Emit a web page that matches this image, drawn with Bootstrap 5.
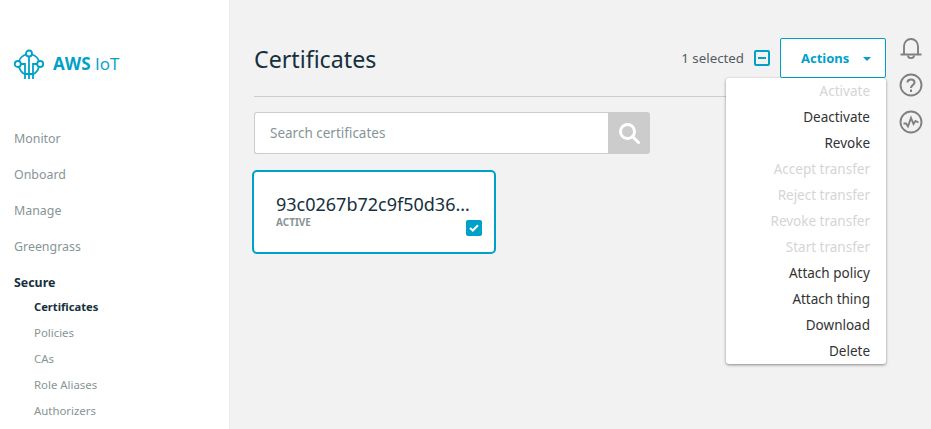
<!DOCTYPE html>
<html lang="en">
<head>
<meta charset="utf-8">
<title>AWS IoT Certificates</title>
<link rel="stylesheet" href="https://cdn.jsdelivr.net/npm/bootstrap@5.3.0/dist/css/bootstrap.min.css">
<style>
html,body{height:429px;overflow:hidden}
body{font-family:"Noto Sans","Open Sans",sans-serif;background:#f2f2f2;color:#16303d;font-size:13px}
.shell{height:429px}
.side{width:230px;flex:none;background:#fff;padding:44px 14px 0;overflow:hidden;border-right:1px solid #eee}
.brand{color:#00a1c9;height:40px;gap:9px;font-family:"Open Sans",sans-serif;font-size:17px;line-height:40px;margin-bottom:37px;white-space:nowrap}
.brand b{font-weight:700}
.brand span{font-weight:400}
.side-top{display:block;color:#879596;font-size:12.4px;line-height:36px;height:36px;text-decoration:none}
.side-top.on{color:#16303d;font-weight:700;line-height:36px}
.side-sub{display:block;color:#879596;font-size:11.4px;line-height:26px;height:26px;padding-left:20px;text-decoration:none}
.side-sub.on{color:#16303d;font-weight:700;font-size:11.2px;margin-top:-7px}
.work{padding:38px 0 0 24px;min-width:0}
.title{font-size:23.2px;font-weight:400;margin:0;padding-top:2px;line-height:38px;color:#16303d}
.count{color:#545b64;font-size:13.3px;margin-right:10px;padding-top:2px}
.indet{width:16px;height:16px;border:2px solid #00a1c9;border-radius:2px;margin-right:10px}
.indet i{display:block;width:8px;height:2px;background:#00a1c9}
.act-btn{width:106px;height:40px;border:1px solid #00a1c9;border-radius:2px;background:#fff;color:#00a1c9;font-weight:700;font-size:13px;padding:2px 0 0 20px;gap:14px}
.act-btn:hover,.act-btn:active{background:#fff;color:#00a1c9;border-color:#00a1c9}
.caret{width:0;height:0;border-left:4px solid transparent;border-right:4px solid transparent;border-top:4px solid #00a1c9}
.act-menu{right:0;top:40px;width:159px;padding:0;margin:0;border:0;border-radius:3px;box-shadow:0 1px 3px rgba(0,0,0,.45);height:286px;font-size:13.5px}
.act-item{padding:0 16px 0 0;text-align:right;height:26px;line-height:26px;color:#333;background:none}
.act-item.disabled{color:#d5d5d5}
.rule{height:1px;background:#ccc;margin:18px 0 15px}
.finder{width:396px;height:42px}
.finder input{height:42px;border:1px solid #ccc;border-right:0;border-radius:3px 0 0 3px;padding-left:15px;font-size:13.5px;color:#333;min-width:0}
.finder input::placeholder{color:#879596;opacity:1}
.finder button{width:42px;height:42px;flex:none;background:#ccc;border:0;border-radius:0 3px 3px 0;padding:0}
.cert{width:244px;height:84px;margin:16px 0 0 -2px;border:2px solid #00a1c9;border-radius:5px;background:#fff;padding:20px 22px;position:relative}
.cert-id{font-size:18px;line-height:24px;color:#16303d;white-space:nowrap}
.cert-state{font-size:10px;font-weight:700;color:#879596;line-height:12px}
.tick{position:absolute;right:12px;bottom:16px;width:16px;height:16px;background:#00a1c9;border-radius:2px}
.rail{width:45px;flex:none;padding:36px 0 0 5px;gap:13px}
</style>
</head>
<body>
<div class="shell d-flex">
  <nav class="side">
    <div class="brand d-flex align-items-center">
      <svg width="30" height="30" viewBox="0 0 30 30" fill="none" stroke="#00a1c9" stroke-width="1.8">
        <circle cx="15" cy="4.500" r="3"/><circle cx="3.800" cy="15" r="3"/><circle cx="26.200" cy="15" r="3"/>
        <path d="M12.200 5.500C8.500 6.500 6 9 5 12.200M17.800 5.500C21.500 6.500 24 9 25 12.200M5 17.800C6 21 8 24 10.500 25H19.500C22 24 24 21 25 17.800"/>
        <path d="M15 7.500V30M11 30V15H6.800M19 30V15H23.200"/>
      </svg>
      <div><b>AWS</b> <span>IoT</span></div>
    </div>
    <a class="side-top" href="#">Monitor</a>
    <a class="side-top" href="#">Onboard</a>
    <a class="side-top" href="#">Manage</a>
    <a class="side-top" href="#">Greengrass</a>
    <a class="side-top on" href="#">Secure</a>
    <a class="side-sub on" href="#">Certificates</a>
    <a class="side-sub" href="#">Policies</a>
    <a class="side-sub" href="#">CAs</a>
    <a class="side-sub" href="#">Role Aliases</a>
    <a class="side-sub" href="#">Authorizers</a>
  </nav>
  <main class="work flex-grow-1">
    <div class="d-flex align-items-center justify-content-between">
      <h1 class="title">Certificates</h1>
      <div class="d-flex align-items-center">
        <span class="count">1 selected</span>
        <span class="indet d-flex align-items-center justify-content-center"><i></i></span>
        <div class="dropdown">
          <button class="btn act-btn d-flex align-items-center" type="button">Actions <span class="caret"></span></button>
          <div class="dropdown-menu show act-menu">
            <a class="dropdown-item act-item disabled">Activate</a>
            <a class="dropdown-item act-item">Deactivate</a>
            <a class="dropdown-item act-item">Revoke</a>
            <a class="dropdown-item act-item disabled">Accept transfer</a>
            <a class="dropdown-item act-item disabled">Reject transfer</a>
            <a class="dropdown-item act-item disabled">Revoke transfer</a>
            <a class="dropdown-item act-item disabled">Start transfer</a>
            <a class="dropdown-item act-item">Attach policy</a>
            <a class="dropdown-item act-item">Attach thing</a>
            <a class="dropdown-item act-item">Download</a>
            <a class="dropdown-item act-item">Delete</a>
          </div>
        </div>
      </div>
    </div>
    <div class="rule"></div>
    <div class="finder d-flex">
      <input class="form-control shadow-none" type="text" placeholder="Search certificates">
      <button type="button" class="d-flex align-items-center justify-content-center" aria-label="Search">
        <svg width="22" height="22" viewBox="0 0 22 22" fill="none" stroke="#fff" stroke-width="3"><circle cx="9.500" cy="9.500" r="7"/><path d="M14.500 14.500L20.500 20.500" stroke-linecap="round"/></svg>
      </button>
    </div>
    <div class="cert">
      <div class="cert-id">93c0267b72c9f50d36…</div>
      <div class="cert-state">ACTIVE</div>
      <span class="tick d-flex align-items-center justify-content-center">
        <svg width="10" height="8" viewBox="0 0 10 8" fill="none" stroke="#fff" stroke-width="2"><path d="M1 4L3.800 6.500L9 1.200"/></svg>
      </span>
    </div>
  </main>
  <aside class="rail d-flex flex-column align-items-center">
    <svg width="24" height="24" viewBox="0 0 24 24" fill="none" stroke="#808080" stroke-width="1.9"><path d="M5 18V10.500C5 6 8 3 12 3S19 6 19 10.500V18M1.500 18.500H22.500"/><path d="M9 19.500C9 23 15 23 15 19.500"/></svg>
    <svg width="24" height="24" viewBox="0 0 24 24" fill="none" stroke="#808080" stroke-width="1.9"><circle cx="12" cy="12" r="10.500"/><path d="M8.500 9.500C8.500 5.500 15.500 5.500 15.500 9.500C15.500 12 12 12 12 15" stroke-width="2"/><path d="M12 16.500V19" stroke-width="2"/></svg>
    <svg width="24" height="24" viewBox="0 0 24 24" fill="none" stroke="#808080" stroke-width="1.9"><circle cx="12" cy="12" r="10.500"/><path d="M4.500 13.500H7L9 16.500L12 8L14.500 14L16.500 11L19.500 12.500"/></svg>
  </aside>
</div>
</body>
</html>
